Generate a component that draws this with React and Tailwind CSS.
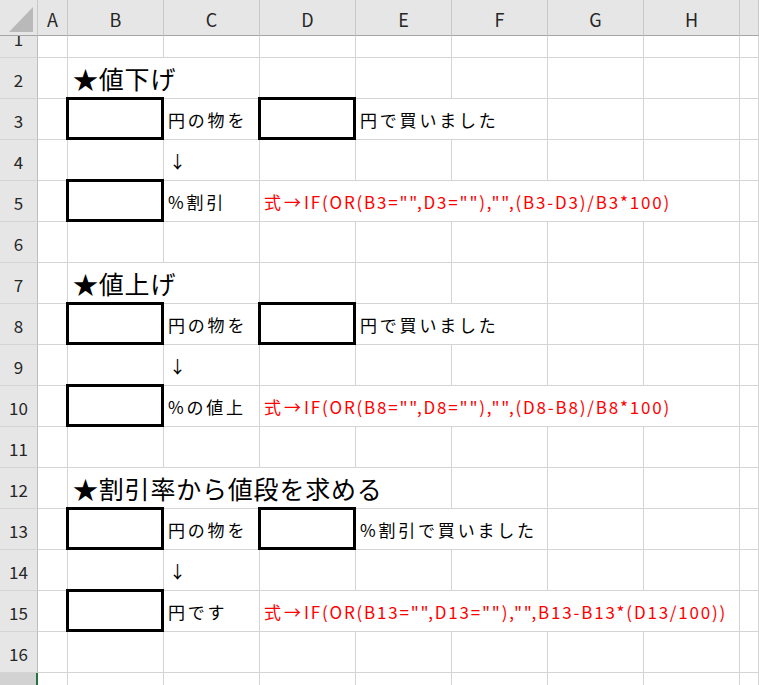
import React from "react";

const FONT = "font-['Noto_Sans_CJK_JP','Noto_Sans',sans-serif]";
const SPAN = { 1: "", 2: "col-span-2", 4: "col-span-4", 5: "col-span-5" };

const E = {};
const B = { box: true };
const T = (text, span = 1) => ({ kind: "text", text, span });
const H = (text, span) => ({ kind: "title", text, span });
const AR = { kind: "arrow" };
const F = (b) => ({ kind: "formula", a: "式→", b, span: 5 });

const empty = [E, E, E, E, E, E, E, E, E];

const rows = [
  empty,
  [E, H("★値下げ", 2), E, E, E, E, E, E],
  [E, B, T("円の物を"), B, T("円で買いました", 2), E, E, E],
  [E, E, AR, E, E, E, E, E, E],
  [E, B, T("%割引"), F('IF(OR(B3="",D3=""),"",(B3-D3)/B3*100)'), E],
  empty,
  [E, H("★値上げ", 2), E, E, E, E, E, E],
  [E, B, T("円の物を"), B, T("円で買いました", 2), E, E, E],
  [E, E, AR, E, E, E, E, E, E],
  [E, B, T("%の値上"), F('IF(OR(B8="",D8=""),"",(D8-B8)/B8*100)'), E],
  empty,
  [E, H("★割引率から値段を求める", 4), E, E, E, E],
  [E, B, T("円の物を"), B, T("%割引で買いました", 2), E, E, E],
  [E, E, AR, E, E, E, E, E, E],
  [E, B, T("円です"), F('IF(OR(B13="",D13=""),"",B13-B13*(D13/100))'), E],
  empty,
];

function Cell({ c }) {
  const span = SPAN[c.span || 1];
  const base = `relative border-r border-b border-[#d4d4d4] flex items-center whitespace-nowrap ${span}`;
  let inner = null;
  if (c.kind === "text") {
    inner = <span className="pl-[4px] text-[17px] tracking-[2.8px] text-black leading-none">{c.text}</span>;
  } else if (c.kind === "title") {
    inner = <span className="pl-[5px] text-[25px] tracking-[0.8px] text-black leading-none">{c.text}</span>;
  } else if (c.kind === "arrow") {
    inner = <span className="pl-[5px] text-[17px] text-black leading-none">↓</span>;
  } else if (c.kind === "formula") {
    inner = (
      <span className="pl-[4px] text-[17px] text-[#ff0000] leading-none">
        <span className="tracking-[3px]">{c.a}</span>
        <span className="tracking-[1.8px]">{c.b}</span>
      </span>
    );
  }
  return (
    <div className={base}>
      {inner}
      {c.box && (
        <div className="absolute -left-[2px] -top-[2px] -right-[1px] -bottom-[1px] border-[3px] border-black z-10" />
      )}
    </div>
  );
}

function RowHead({ n }) {
  return (
    <div className="bg-[#e6e6e6] border-r border-b border-r-[#bdbdbd] border-b-[#d4d4d4] flex items-center justify-center pt-[3px] text-[17px] text-[#262626] leading-none">
      {n}
    </div>
  );
}

export default function App() {
  const letters = ["A", "B", "C", "D", "E", "F", "G", "H", ""];
  return (
    <div className={`w-[759px] h-[685px] overflow-hidden bg-white ${FONT}`}>
      <div className="grid grid-cols-[38px_30px_repeat(7,96px)_1fr] grid-rows-[36px_22px_repeat(15,41px)_12px] w-[759px] h-[685px]">
        {/* header row */}
        <div className="bg-[#e6e6e6] border-r border-b border-r-[#c8c8c8] border-b-[#a6a6a6] relative">
          <svg width="37" height="35" className="absolute left-0 top-0">
            <polygon points="33,7 33,32 9,32" fill="#b9b9b9" />
          </svg>
        </div>
        {letters.map((l, i) => (
          <div
            key={"h" + i}
            className="bg-[#e6e6e6] border-r border-b border-r-[#c8c8c8] border-b-[#a6a6a6] flex items-center justify-center pt-[3px] text-[18px] text-[#262626] leading-none"
          >
            {l}
          </div>
        ))}

        {/* row 1 (partially scrolled) */}
        <div className="bg-[#e6e6e6] border-r border-b border-r-[#bdbdbd] border-b-[#d4d4d4] overflow-hidden flex flex-col justify-end">
          <div className="h-[40px] shrink-0 flex items-center justify-center pt-[3px] text-[17px] text-[#262626] leading-none">
            1
          </div>
        </div>
        {empty.map((c, i) => (
          <Cell key={"r1" + i} c={c} />
        ))}

        {rows.slice(1).map((r, ri) => (
          <React.Fragment key={"r" + ri}>
            <RowHead n={ri + 2} />
            {r.map((c, ci) => (
              <Cell key={ci} c={c} />
            ))}
          </React.Fragment>
        ))}

        {/* row 17 (partial) */}
        <div className="bg-[#d2d2d2] border-r-2 border-r-[#217346]" />
        {empty.map((c, i) => (
          <div key={"r17" + i} className="border-r border-[#d4d4d4]" />
        ))}
      </div>
    </div>
  );
}
